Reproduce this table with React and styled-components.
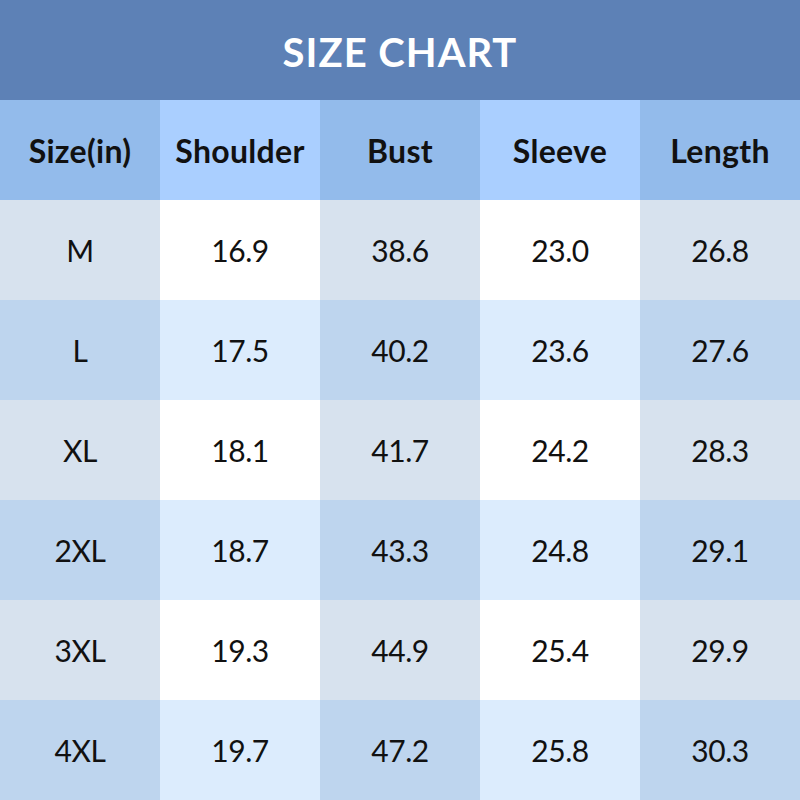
import React from 'react'
import styled, { createGlobalStyle } from 'styled-components'

const COLUMNS = ['Size(in)', 'Shoulder', 'Bust', 'Sleeve', 'Length']

const ROWS = [
  ['M', '16.9', '38.6', '23.0', '26.8'],
  ['L', '17.5', '40.2', '23.6', '27.6'],
  ['XL', '18.1', '41.7', '24.2', '28.3'],
  ['2XL', '18.7', '43.3', '24.8', '29.1'],
  ['3XL', '19.3', '44.9', '25.4', '29.9'],
  ['4XL', '19.7', '47.2', '25.8', '30.3']
]

// [odd column, even column] per row kind
const PALETTE = {
  head: ['#93bbeb', '#aacfff'],
  light: ['#d7e2ee', '#ffffff'],
  dark: ['#bed5ee', '#dcecfd']
}

const Global = createGlobalStyle`
  body {
    margin: 0;
    font-family: Lato, "Open Sans", "Liberation Sans", sans-serif;
    color: #111;
  }
`

const Chart = styled.div`
  width: 800px;
  height: 800px;
  display: grid;
  grid-template-rows: repeat(8, 100px);
`

const Title = styled.div`
  background: #5d81b6;
  color: #fff;
  font-size: 40px;
  font-weight: 700;
  letter-spacing: 1px;
  display: flex;
  align-items: center;
  justify-content: center;
  padding-top: 4px;
`

const Row = styled.div`
  display: grid;
  grid-template-columns: repeat(5, 160px);
`

const Cell = styled.div`
  background: ${({ bg }) => bg};
  display: flex;
  align-items: center;
  justify-content: center;
  font-size: ${({ head }) => (head ? '32px' : '30px')};
  font-weight: ${({ head }) => (head ? 700 : 400)};
  letter-spacing: ${({ head }) => (head ? '0.3px' : '-0.5px')};
`

const renderRow = (cells, kind, key) => (
  <Row key={key}>
    {cells.map((c, i) => (
      <Cell key={i} head={kind === 'head'} bg={PALETTE[kind][i % 2]}>
        {c}
      </Cell>
    ))}
  </Row>
)

export default function App() {
  return (
    <>
      <Global />
      <Chart>
        <Title>SIZE CHART</Title>
        {renderRow(COLUMNS, 'head', 'head')}
        {ROWS.map((r, i) => renderRow(r, i % 2 ? 'dark' : 'light', r[0]))}
      </Chart>
    </>
  )
}
